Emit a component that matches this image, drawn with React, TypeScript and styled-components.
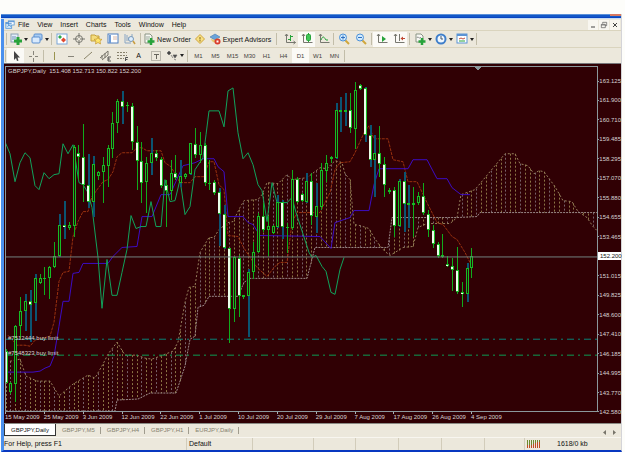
import React from "react";
import styled, { createGlobalStyle, css } from "styled-components";

const Global = createGlobalStyle`
  * { box-sizing: border-box; }
  body { margin: 0; background: #fdfdfa; font-family: "Liberation Sans", Arial, sans-serif; font-size: 7px; color: #111; }
  button { font: inherit; color: inherit; border: 0; padding: 0; margin: 0; background: none; cursor: default; }
`;

const Page = styled.div`
  height: 100vh;
  padding: 14px 3px 0 1px;
  display: flex;
  flex-direction: column;
`;
const Frame = styled.main`
  flex: 1;
  min-height: 0;
  display: flex;
  flex-direction: column;
  background: #ece8dc;
  border-left: 3px solid #4a90ee;
  border-right: 1px solid #d4d4d8;
  border-bottom: 2px solid #0838c0;
`;
const TitleBar = styled.div`
  display: flex;
  justify-content: flex-end;
  height: 5px;
  margin-left: -3px;
  background: linear-gradient(#5a90d8 0 1px, #1258c8 1px 3px, #0a44c0 3px 4px, #c4dcf4 4px);
`;
const TitleClose = styled.span`
  width: 11px;
  height: 2px;
  background: #d87860;
`;
const MenuBar = styled.nav`
  display: flex;
  align-items: center;
  height: 11px;
  padding: 0 1px;
  gap: 8px;
`;
const MenuIcon = styled.span`
  display: flex;
  margin-right: -5px;
`;
const MenuItem = styled.button`
  line-height: 10px;
`;
const WindowButtons = styled.div`
  display: flex;
  gap: 1px;
  margin-left: auto;
`;
const WindowButton = styled.button`
  width: 10px;
  height: 10px;
  display: flex;
  justify-content: center;
  align-items: center;
  background: #f8f6f0;
`;
const Toolbar = styled.div<{ $height: number }>`
  display: flex;
  align-items: center;
  height: ${(p) => p.$height}px;
  border-top: 1px solid #dad4be;
`;
const Grip = styled.span<{ $width: number }>`
  width: ${(p) => p.$width}px;
  height: 12px;
  flex: none;
  background: linear-gradient(#c2bda9, #c2bda9) center / 1px 100% no-repeat;
`;
const ToolButton = styled.button<{ $active?: boolean; $width?: number }>`
  width: ${(p) => p.$width ?? 17}px;
  height: 15px;
  flex: none;
  display: flex;
  align-items: center;
  justify-content: center;
  gap: 2px;
  white-space: nowrap;
  ${(p) => p.$active && css`background: #fbfaf6;`}
`;
const TimeframeButton = styled(ToolButton)`
  font-size: 6px;
  color: #44423c;
`;
const ChartPanel = styled.section`
  flex: 1;
  min-height: 0;
  display: grid;
  grid-template-columns: minmax(0, 1fr) 23px;
  grid-template-rows: minmax(0, 1fr) 11px;
  padding: 2px 0 0 1px;
  background: #300004;
  border-top: 1px solid #77777a;
  border-bottom: 1px solid #8a8a84;
  color: #d6d2d2;
  font-size: 6px;
`;
const Plot = styled.div`
  position: relative;
  min-height: 0;
  border: 1px solid #8b989c;
`;
const PlotSvg = styled.svg`
  display: block;
  width: 100%;
  height: 100%;
`;
const PlotTitle = styled.h1`
  position: absolute;
  left: 2px;
  top: 0;
  margin: 0;
  font: inherit;
  line-height: 8px;
  white-space: pre;
`;
const OrderLabel = styled.span<{ $top: number }>`
  position: absolute;
  left: 2px;
  top: ${(p) => p.$top}%;
  line-height: 8px;
`;
const PriceAxis = styled.div`
  position: relative;
  display: flex;
  flex-direction: column;
  justify-content: space-between;
  padding-top: 11px;
  margin-bottom: -4px;
`;
const Price = styled.span<{ $current?: boolean }>`
  display: flex;
  align-items: center;
  height: 8px;
  line-height: 8px;
  ${(p) => p.$current ? css`background: #fff; color: #111; padding-left: 2px;` : css`
    &::before { content: ""; width: 2px; height: 1px; background: #8b989c; }
  `}
`;
const DateAxis = styled.div`
  display: grid;
  grid-template-columns: repeat(13, minmax(0, 388fr)) minmax(0, 880fr);
  white-space: nowrap;
  line-height: 11px;
`;
const DateLabel = styled.span`
  background: linear-gradient(#a8b2b4, #a8b2b4) 0 0 / 1px 2px no-repeat;
`;
const TabBar = styled.div`
  display: flex;
  align-items: flex-start;
  height: 14px;
  font-size: 6px;
  line-height: 12px;
  color: #85816f;
  border-bottom: 1px solid #f8f6f0;
`;
const Tab = styled.button<{ $active?: boolean }>`
  padding: 0 6px;
  height: 12px;
  position: relative;
  &:not(:first-child)::after {
    content: "";
    position: absolute;
    right: 0;
    top: 3px;
    height: 7px;
    border-right: 1px solid #a09c8e;
  }
  ${(p) => p.$active && css`
    background: #fff;
    color: #111;
    border: solid #333;
    border-width: 0 1px 1px;
  `}
`;
const TabScroll = styled.div`
  display: flex;
  gap: 7px;
  margin: 3px 5px 0 auto;
`;
const StatusBar = styled.footer`
  display: grid;
  grid-template-columns: 182px minmax(0, 66fr) minmax(0, 61fr) repeat(4, minmax(0, 43fr)) minmax(0, 40fr) 97px;
  height: 12px;
  line-height: 12px;
`;
const StatusCell = styled.div`
  display: flex;
  align-items: center;
  padding-left: 2px;
  white-space: nowrap;
  & + & { border-left: 1px solid #d2ccba; }
  &:first-child { padding-left: 0; }
`;
const Traffic = styled.span`
  margin-left: 16px;
`;

const GREEN = "#27a33a";

const drawings: Record<string, React.ReactNode> = {
  app: <><rect x="1" y="3" width="7" height="7" fill="#cfe6fa" stroke="#5a9ad8" /><rect x="4" y="1" width="7" height="5" fill="#fff" stroke="#5a9ad8" /><path d="M1 4h7M4 2h7" stroke="#3c80cc" /><path d="M3 8l2-2 2 2" stroke="#4a90d0" fill="none" /></>,
  newChart: <><rect x="1" y="1" width="7" height="8" fill="#e5eefa" stroke="#8aa0b4" /><path d="M3 3v4M5 3v3" stroke="#6d91b8" /><path d="M8 4v8M4 8h8" stroke={GREEN} strokeWidth="3" /></>,
  profiles: <><rect x="3" y="1" width="8" height="6" rx="1" fill="#a8ccf2" stroke="#5b8fd0" /><rect x="1" y="4" width="8" height="6" rx="1" fill="#d9eafc" stroke="#5b8fd0" /></>,
  market: <><rect x="1" y="1" width="10" height="10" fill="#fff" stroke="#7ba6d8" /><path d="M2 4l2-2 2 2-2 2z" fill="#2ea84a" /><path d="M5 7l2.500-2.500L10 7 7.500 9.500z" fill="#e04a30" /></>,
  target: <><circle cx="6" cy="6" r="3.5" fill="none" stroke="#77776f" /><path d="M6 0v5M6 7v5M0 6h5M7 6h5" stroke="#77776f" /></>,
  folder: <><path d="M1 2h4l1 1h3v5H1z" fill="#f4dc7c" stroke="#c5a23c" /><path d="M8 4l1 2 3 .4-2 1.7.5 2.9L8 9.500l-2.500 1.500.5-2.900-2-1.700 3-.4z" fill="#ffe66c" stroke="#c5982c" strokeWidth=".7" /></>,
  panel: <><rect x="1" y="1" width="10" height="9" fill="#fff" stroke="#4f7fc0" /><path d="M2 2h2v8H2z" fill="#6f9cd6" /><path d="M6 4h4M6 6h4" stroke="#d8b8a8" /></>,
  tester: <><path d="M1 1v9h6M3 2v6M5 4v4M8 1v4" stroke="#8aa6c4" fill="none" /><circle cx="7" cy="6" r="2.500" fill="#def" stroke="#7898b8" /><path d="M9 8l2 3" stroke="#c89c40" strokeWidth="1.500" /></>,
  order: <><path d="M2 1h5l2 2v7H2z" fill="#f8f8f4" stroke="#8a9484" /><path d="M3 4h4M3 6h3" stroke="#9aa79a" /><path d="M8 5v7M4.500 8.500h7" stroke={GREEN} strokeWidth="2.500" /></>,
  book: <><path d="M6 1.500l4.500 4.500L6 10.500 1.500 6z" fill="#f8e080" stroke="#d0a640" /><path d="M6 4v2.500M6 7v1.500" stroke="#806420" /></>,
  expert: <><path d="M1 4l5-3 5 3-5 3z" fill="#6ba4da" stroke="#477bb0" strokeWidth=".6" /><path d="M2 6c1 4 5 5 7 1V5L6 7z" fill="#e8c86e" /><circle cx="8.500" cy="8.500" r="3" fill="#d83c2c" /><rect x="7.500" y="7.500" width="2" height="2" fill="#fff" /></>,
  bars: <><path d="M2.500 1v8.500h9M1 3l1.500-2L4 3M9.500 8l2 1.500-2 1.500" stroke="#77776f" fill="none" /><path d="M6.500 2v6M6 3.500h3M4 6.500h2" stroke={GREEN} /></>,
  candles: <><path d="M2.500 1v8.500h9M1 3l1.500-2L4 3" stroke="#77776f" fill="none" /><path d="M7.500 0v9" stroke={GREEN} /><rect x="5.500" y="1.500" width="4" height="6" rx="1" fill="#42c858" stroke={GREEN} /></>,
  line: <><path d="M2.500 1v8.500h9M1 3l1.500-2L4 3" stroke="#77776f" fill="none" /><path d="M3 7c2-5 3-3 5 0h2" stroke={GREEN} fill="none" /></>,
  zoomIn: <><path d="M7 7l4 4" stroke="#d0a63c" strokeWidth="2" /><circle cx="5" cy="4.500" r="3.500" fill="#d2eafc" stroke="#4b91d8" /><path d="M3 4.500h4M5 2.500v4" stroke="#2e70c0" /></>,
  zoomOut: <><path d="M7 7l4 4" stroke="#d0a63c" strokeWidth="2" /><circle cx="5" cy="4.500" r="3.500" fill="#d2eafc" stroke="#4b91d8" /><path d="M3 4.500h4" stroke="#2e70c0" /></>,
  scroll: <><path d="M2.500 1v8.500h9M1 3l1.500-2L4 3" stroke="#77776f" fill="none" /><path d="M6 3l4 3-4 3z" fill={GREEN} /></>,
  shift: <><path d="M2.500 1v8.500h9M1 3l1.500-2L4 3M6.500 1v7" stroke="#77776f" fill="none" /><path d="M10 3.500L7.500 5.500l2.500 2z" fill="#c04630" /><path d="M9 5.500h3" stroke="#c04630" /></>,
  indicator: <><path d="M2 1h5l2 2v6H2z" fill="#f8f8f4" stroke="#8a9484" /><path d="M3 5c1-3 2 2 4-1" stroke="#888" fill="none" /><path d="M8 5v7M4.500 8.500h7" stroke={GREEN} strokeWidth="2.500" /></>,
  clock: <><circle cx="6" cy="6" r="4.500" fill="#eef6fe" stroke="#3f7fca" strokeWidth="2" /><path d="M6 3v3h2" stroke="#456" fill="none" /></>,
  template: <><rect x="1" y="1" width="10" height="9" fill="#fff" stroke="#5b93d4" /><path d="M1 2h10" stroke="#5b93d4" strokeWidth="2" /><path d="M3 6l2-1 2 1 2-1" stroke="#c05040" fill="none" /><path d="M3 8h6" stroke={GREEN} /></>,
  pointer: <path d="M4 1v9l2-2 1 3 1.500-.5-1-3H10z" fill="#444" />,
  cross: <path d="M6.500 1v4M6.500 8v4M2 6.500h3M8 6.500h3" stroke="#87847a" />,
  vline: <path d="M6.500 2v8" stroke="#9a9450" />,
  hline: <path d="M3 6.500h6" stroke="#88857a" />,
  trend: <path d="M2 9l8-7" stroke="#8a8468" />,
  channel: <><path d="M1 8l8-7M3 10l6-5M3 5v4M6 3v5M9 1v4" stroke="#77746a" /><path d="M9 7h3M9 7v4h3M9 9h2" stroke="#333" fill="none" strokeWidth=".8" /></>,
  fib: <><path d="M1 2.500h10M1 5.500h10M1 8.500h7" stroke="#87806c" strokeDasharray="2 1" /><path d="M9.500 11V7.500H12M9.500 9.500h2" stroke="#555" fill="none" /></>,
  label: <><rect x="1.500" y="1.500" width="9" height="9" fill="none" stroke="#87847a" strokeDasharray="1 1" /><path d="M4 4.500h5M6.500 4v5" stroke="#66645c" /></>,
  arrows: <path d="M3 1l2 2-2 2-2-2zM7 5h4l-2 3zM5 5l2 3M8 9l2 1" fill="#444" stroke="#666" strokeWidth=".7" />,
  minimize: <path d="M3 9h6" stroke="#444" strokeWidth="1.500" />,
  restore: <path d="M4 4V2h6v5H8M2 5h6v5H2zM2 6h6" stroke="#555" fill="none" />,
  close: <path d="M3 3l6 6M9 3L3 9" stroke="#444" strokeWidth="1.500" />,
  traffic: <><path d="M.5 2v5M2.500 2v5M4.500 2v5M6.500 2v4M8.500 2v3M10.500 2v2M12.500 2v2" stroke="#6c8a2c" /><path d="M.5 7v3M2.500 7v3M4.500 7v3M6.500 6v4M8.500 5v5M10.500 4v6M12.500 4v6" stroke="#c04a24" /></>,
};

function Icon({ name, size = 12, wide = false }: { name: string; size?: number; wide?: boolean }) {
  return <svg width={wide ? 14 : size} height={size} viewBox={wide ? "0 0 14 12" : "0 0 12 12"} aria-hidden="true">{drawings[name]}</svg>;
}

function Caret() {
  return <svg width="4" height="3" viewBox="0 0 4 3" aria-hidden="true"><path d="M0 0h4L2 3z" fill="#222" /></svg>;
}

function Tool({ icon, active, menu }: { icon: string; active?: boolean; menu?: boolean }) {
  return <ToolButton $active={active} $width={menu ? 21 : 17} aria-label={icon}><Icon name={icon} />{menu && <Caret />}</ToolButton>;
}

type Point = [number, number];
// high, low, body top, body bottom, kind: u = rising, d = falling, b = rising with a blue range, e = falling with a blue range
type Candle = [number, number, number, number, "u" | "d" | "b" | "e"];

const candles: Candle[] = [
  [350,384,352,384,"d"],[383,395,384,393,"u"],[326,403,327,385,"u"],[298,340,312,327,"u"],[295,332,302,312,"b"],[291,343,302,306,"e"],
  [275,322,279,304,"b"],[275,285,279,284,"u"],[268,296,279,280,"u"],[267,300,268,279,"u"],[243,269,257,268,"u"],[214,258,225,257,"b"],
  [201,240,225,227,"e"],[222,230,225,228,"u"],[145,237,147,226,"u"],[145,180,153,157,"d"],[124,202,157,185,"d"],[154,208,185,202,"e"],
  [156,217,164,202,"b"],[171,180,172,176,"u"],[157,203,165,172,"u"],[145,187,148,166,"u"],[112,158,123,149,"u"],[99,133,101,123,"u"],
  [91,124,101,107,"e"],[102,112,105,106,"u"],[103,150,106,142,"d"],[126,190,142,161,"d"],[142,203,161,183,"d"],[157,213,163,182,"u"],
  [138,175,153,163,"b"],[150,161,153,158,"d"],[157,188,159,186,"d"],[180,227,185,191,"d"],[160,200,173,191,"u"],[155,180,173,178,"d"],
  [160,187,176,183,"b"],[173,179,174,177,"u"],[143,175,143,174,"b"],[128,158,144,155,"d"],[132,163,145,155,"u"],[143,186,145,183,"d"],
  [160,190,183,184,"u"],[180,195,182,193,"d"],[188,247,192,214,"e"],[205,250,214,249,"e"],[249,344,249,310,"d"],[257,323,258,310,"u"],
  [256,318,259,297,"d"],[296,300,296,298,"u"],[270,338,273,297,"b"],[243,280,253,273,"u"],[213,254,216,253,"u"],[203,232,216,230,"d"],
  [216,257,226,230,"u"],[225,234,226,233,"u"],[195,228,202,227,"b"],[200,240,202,227,"e"],[223,254,227,228,"u"],[170,230,179,228,"u"],
  [177,203,179,202,"d"],[193,202,194,201,"d"],[173,203,181,202,"b"],[173,225,181,216,"d"],[183,233,206,217,"b"],[163,210,170,207,"u"],
  [155,182,163,171,"u"],[156,163,157,159,"u"],[103,159,110,158,"b"],[97,132,110,112,"b"],[93,126,110,112,"b"],[93,133,110,128,"d"],
  [82,149,90,129,"u"],[84,90,85,89,"d"],[87,142,88,135,"e"],[125,167,135,160,"e"],[135,197,153,160,"b"],[126,177,153,164,"d"],
  [157,197,164,185,"d"],[188,194,190,192,"u"],[187,237,190,226,"d"],[179,227,181,226,"b"],[172,232,181,204,"e"],[185,228,203,205,"b"],
  [187,237,203,205,"u"],[192,205,196,203,"u"],[183,215,196,213,"d"],[210,237,214,230,"d"],[225,249,230,245,"d"],[243,259,245,257,"d"],
  [234,259,256,258,"u"],[257,268,265,267,"d"],[259,292,267,271,"d"],[248,295,271,293,"d"],[283,308,293,295,"d"],[264,303,269,295,"b"],
  [249,279,257,269,"u"],
];

const lagging: Point[] = [[5,142],[10,154],[15,182],[20,163],[25,153],[30,158],[35,186],[39,190],[44,173],[49,179],[54,175],[59,174],[63,144],[68,154],[73,145],[79,183],[83,185],[88,193],[92,208],[98,258],[102,309],[107,260],[112,296],[117,296],[122,273],[127,250],[131,216],[136,229],[141,227],[146,227],[151,202],[156,227],[161,227],[165,180],[170,202],[175,201],[180,180],[185,215],[190,207],[195,170],[203,158],[206,135],[209,111],[219,111],[224,127],[228,91],[233,88],[238,133],[243,159],[248,153],[253,165],[258,185],[262,191],[267,222],[272,183],[277,203],[287,203],[292,198],[296,213],[309,253],[312,258],[316,256],[322,267],[326,272],[331,293],[335,295],[340,270],[344,258]];
const baseLine: Point[] = [[5,373],[33,373],[40,372],[45,369],[50,367],[54,357],[59,327],[63,302],[69,302],[73,274],[79,273],[83,264],[108,264],[113,257],[122,248],[137,247],[142,217],[152,217],[161,195],[170,195],[183,166],[195,163],[203,159],[214,159],[218,167],[224,172],[228,217],[243,217],[248,223],[253,225],[260,236],[320,237],[331,249],[335,223],[350,218],[354,211],[369,211],[374,185],[379,169],[408,169],[413,160],[427,160],[437,179],[447,179],[452,188],[461,195],[470,195]];
const signal: Point[] = [[8,336],[17,346],[25,346],[30,347],[35,341],[50,337],[54,323],[59,282],[63,273],[69,272],[73,237],[78,222],[83,212],[88,212],[92,197],[103,182],[108,180],[113,172],[117,157],[122,153],[132,153],[137,148],[142,148],[147,151],[161,151],[165,163],[171,167],[180,183],[190,183],[195,177],[204,177],[209,162],[214,162],[219,185],[224,190],[228,236],[238,237],[243,247],[250,258],[257,268],[267,277],[275,267],[280,263],[287,263],[292,223],[297,213],[320,213],[330,193],[335,170],[340,163],[350,162],[355,153],[364,133],[369,126],[374,139],[388,139],[393,160],[403,162],[408,182],[417,182],[427,203],[437,223],[443,225],[452,237],[457,240],[465,253],[472,267]];
const spanA: Point[] = [[6,363],[20,360],[26,377],[37,382],[50,382],[59,397],[73,385],[88,376],[95,379],[103,365],[108,355],[117,343],[125,356],[137,356],[145,359],[152,360],[160,357],[173,352],[178,343],[185,303],[189,288],[195,287],[200,253],[209,238],[214,238],[219,230],[228,223],[233,222],[240,208],[244,201],[258,200],[262,195],[267,183],[278,184],[287,175],[292,180],[307,178],[320,168],[327,169],[335,161],[342,163],[345,174],[350,180],[352,203],[354,225],[360,226],[369,229],[374,238],[379,245],[385,252],[390,256],[395,253],[403,248],[413,247],[418,228],[427,224],[450,224],[457,218],[461,195],[475,190],[490,172],[505,154],[515,154],[520,164],[528,166],[534,174],[539,171],[544,172],[555,187],[563,201],[572,202],[578,212],[587,218],[593,227],[597,231]];
const spanB: Point[] = [[6,412],[115,412],[117,401],[138,400],[150,394],[176,394],[185,367],[190,340],[195,337],[198,308],[204,306],[209,297],[238,297],[244,283],[250,279],[307,279],[315,248],[388,248],[392,218],[457,218],[477,217],[480,213],[597,213]];

const at = (points: Point[], x: number) => {
  const i = points.findIndex((p) => p[0] >= x);
  if (i <= 0) return points[i < 0 ? points.length - 1 : 0][1];
  const [x0, y0] = points[i - 1];
  const [x1, y1] = points[i];
  return Math.round(y0 + ((y1 - y0) * (x - x0)) / (x1 - x0));
};
const barX = (i: number) => Math.round(5.6 + i * 4.853);
const join = (points: Point[]) => points.map((p) => p.join(",")).join(" ");

function Chart() {
  return (
    <PlotSvg viewBox="6 67 591 345" preserveAspectRatio="none" shapeRendering="crispEdges" role="img" aria-label="GBPJPY daily candlestick chart">
      {Array.from({ length: 122 }, (_, i) => (
        <line key={i} x1={barX(i) + 0.5} x2={barX(i) + 0.5} y1={at(spanA, barX(i))} y2={at(spanB, barX(i))} stroke={i % 3 === 1 ? "#766068" : "#8c7445"} strokeDasharray="2 2" />
      ))}
      <g fill="none">
        <polyline points={join(spanA)} stroke="#96805c" strokeDasharray="2 2" />
        <polyline points={join(spanB)} stroke="#9a8888" strokeDasharray="2 1" />
        <polyline points={join(signal)} stroke="#98300f" strokeDasharray="3 1" />
        <polyline points={join(baseLine)} stroke="#3c0cc4" />
        <polyline points={join(lagging)} stroke="#10a45c" />
      </g>
      <path d="M6 340h591" stroke="#088478" strokeDasharray="7 4 2 4" />
      <path d="M6 356h591" stroke="#0c9c54" strokeDasharray="7 4 2 4" />
      {candles.map(([high, low, top, bottom, kind], i) => {
        const x = barX(i);
        const falling = kind === "d" || kind === "e";
        const blue = kind === "b" || kind === "e";
        return (
          <g key={i}>
            <rect x={x} y={high} width={blue ? 2 : 1} height={low - high} fill={blue ? "#0b5472" : "#10ac1c"} />
            <rect x={x - 1} y={top} width="3" height={Math.max(1, bottom - top)} fill="#16bc24" />
            {bottom - top > 2 && <rect x={x} y={top + 1} width="1" height={bottom - top - 2} fill={falling ? "#fff" : "#24100a"} />}
            {falling && <rect x={x - 1} y={top + 1} width="2" height={Math.max(1, bottom - top - 2)} fill="#eaffea" />}
          </g>
        );
      })}
      <path d="M6 257.500H597" stroke="#718180" />
      <path d="M474 67h8l-4 3z" fill="#8b989c" />
    </PlotSvg>
  );
}

const prices = ["163.125","161.900","160.710","159.485","158.295","157.070","155.880","154.655","153.465","152.200","151.015","149.825","148.600","147.410","146.185","144.995","143.770","142.580"];
const dates = ["15 May 2009","25 May 2009","3 Jun 2009","12 Jun 2009","22 Jun 2009","1 Jul 2009","10 Jul 2009","20 Jul 2009","29 Jul 2009","7 Aug 2009","17 Aug 2009","26 Aug 2009","4 Sep 2009"];

export default function App() {
  return (
    <Page>
      <Global />
      <Frame>
        <TitleBar><TitleClose /></TitleBar>
        <MenuBar>
          <MenuIcon><Icon name="app" size={10} /></MenuIcon>
          {["File", "View", "Insert", "Charts", "Tools", "Window", "Help"].map((m) => <MenuItem key={m}>{m}</MenuItem>)}
          <WindowButtons>
            {["minimize", "restore", "close"].map((n) => <WindowButton key={n} aria-label={n}><Icon name={n} size={8} /></WindowButton>)}
          </WindowButtons>
        </MenuBar>
        <Toolbar $height={17}>
          <Grip $width={4} />
          <Tool icon="newChart" menu /><Tool icon="profiles" menu />
          <Grip $width={3} />
          <Tool icon="market" /><Tool icon="target" /><Tool icon="folder" /><Tool icon="panel" /><Tool icon="tester" />
          <Grip $width={5} />
          <ToolButton $width={48}><Icon name="order" />New Order</ToolButton>
          <Tool icon="book" />
          <ToolButton $width={64}><Icon name="expert" />Expert Advisors</ToolButton>
          <Grip $width={9} />
          <Tool icon="bars" /><Tool icon="candles" active /><Tool icon="line" />
          <Grip $width={3} />
          <Tool icon="zoomIn" /><Tool icon="zoomOut" />
          <Grip $width={4} />
          <Tool icon="scroll" active /><Tool icon="shift" active />
          <Grip $width={5} />
          <Tool icon="indicator" menu /><Tool icon="clock" menu /><Tool icon="template" menu />
          <Grip $width={3} />
        </Toolbar>
        <Toolbar $height={16}>
          <Grip $width={3} />
          <Tool icon="pointer" active /><Tool icon="cross" />
          <Grip $width={4} />
          <Tool icon="vline" /><Tool icon="hline" /><Tool icon="trend" /><Tool icon="channel" /><Tool icon="fib" />
          <ToolButton>A</ToolButton>
          <Tool icon="label" /><Tool icon="arrows" menu />
          <Grip $width={5} />
          {["M1", "M5", "M15", "M30", "H1", "H4", "D1", "W1", "MN"].map((t) => <TimeframeButton key={t} $active={t === "D1"}>{t}</TimeframeButton>)}
          <Grip $width={3} />
        </Toolbar>
        <ChartPanel>
          <Plot>
            <Chart />
            <PlotTitle>GBPJPY,Daily  151.408 152.713 150.822 152.200</PlotTitle>
            <OrderLabel $top={77.5}>#7512444 buy limit</OrderLabel>
            <OrderLabel $top={82}>#7548323 buy limit</OrderLabel>
          </Plot>
          <PriceAxis>{prices.map((p) => <Price key={p} $current={p === "152.200"}>{p}</Price>)}</PriceAxis>
          <DateAxis>{dates.map((d) => <DateLabel key={d}>{d}</DateLabel>)}</DateAxis>
        </ChartPanel>
        <TabBar>
          <Tab $active>GBPJPY,Daily</Tab>
          {["GBPJPY,M5", "GBPJPY,H4", "GBPJPY,H1", "EURJPY,Daily"].map((t) => <Tab key={t}>{t}</Tab>)}
          <TabScroll>
            <button aria-label="Previous tab"><svg width="3" height="5" viewBox="0 0 3 5"><path d="M3 0v5L0 2.500z" fill="#77746a" /></svg></button>
            <button aria-label="Next tab"><svg width="3" height="5" viewBox="0 0 3 5"><path d="M0 0v5l3-2.500z" fill="#77746a" /></svg></button>
          </TabScroll>
        </TabBar>
        <StatusBar>
          <StatusCell>For Help, press F1</StatusCell>
          <StatusCell>Default</StatusCell>
          <StatusCell /><StatusCell /><StatusCell /><StatusCell /><StatusCell /><StatusCell />
          <StatusCell><Icon name="traffic" wide /><Traffic>1618/0 kb</Traffic></StatusCell>
        </StatusBar>
      </Frame>
    </Page>
  );
}
